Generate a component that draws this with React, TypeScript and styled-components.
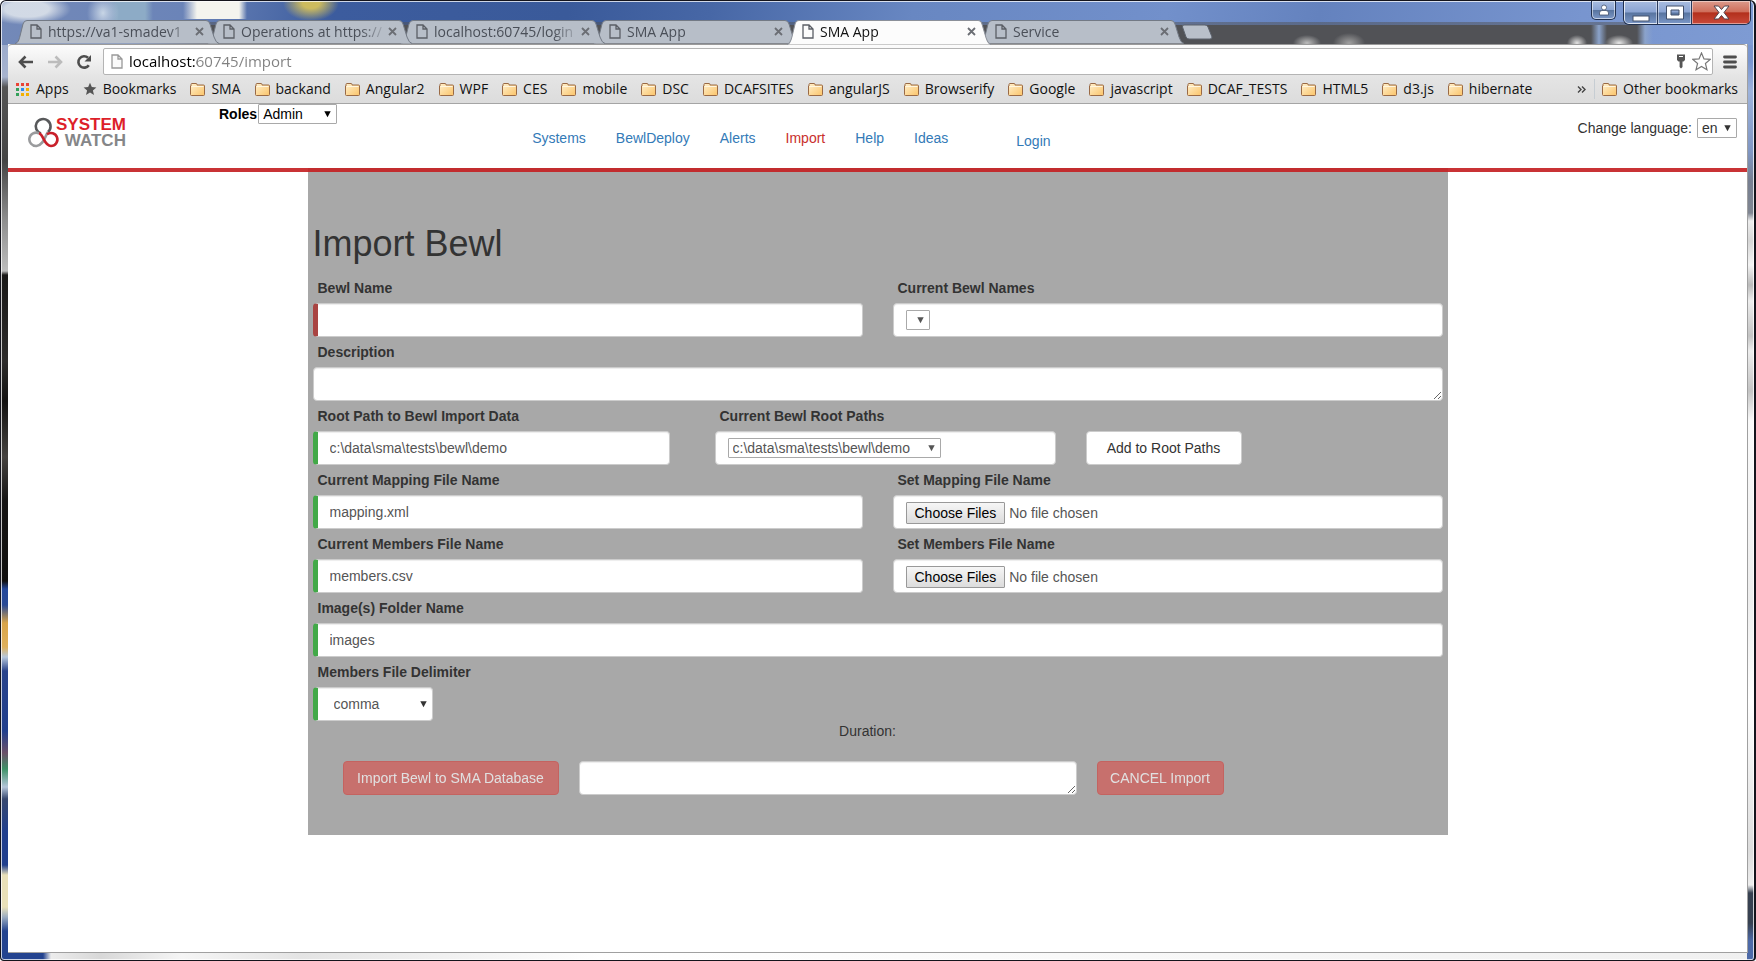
import React from "react";
import styled, { createGlobalStyle, css } from "styled-components";

const GlobalStyle = createGlobalStyle`
  *, *::before, *::after { box-sizing: border-box; }
  body { margin: 0; font-family: "Liberation Sans", Arial, sans-serif; font-size: 14px; line-height: 20px; color: #333; }
  button, input, select, textarea { font-family: inherit; font-size: inherit; line-height: inherit; margin: 0; }
  button { cursor: pointer; }
`;

/* ---------- window frame ---------- */

const Frame = styled.div`
  min-height: 100vh;
  display: flex;
  flex-direction: column;
  border: 1px solid #14141c;
  border-right-width: 2px;
  border-radius: 6px 6px 4px 4px;
  box-shadow: inset 0 0 0 1px rgba(255, 255, 255, 0.75);
  background:
    radial-gradient(ellipse 44px 16px at 26px 8px, rgba(215, 222, 232, 0.95) 50%, transparent) no-repeat,
    radial-gradient(ellipse 16px 20px at 102px 12px, rgba(205, 218, 232, 0.95), transparent) no-repeat,
    linear-gradient(90deg, transparent 104px, #8dabc6 116px, #8dabc6 144px, transparent 152px) 0 0 / 100% 20px no-repeat,
    linear-gradient(90deg, transparent 182px, #f4f4ee 196px, #f4f4ee 238px, transparent 246px) 0 0 / 100% 18px no-repeat,
    radial-gradient(ellipse 28px 18px at 310px 2px, #cdbb5e 30%, transparent) no-repeat,
    radial-gradient(ellipse 14px 8px at 1306px 42px, #bdbdbd, transparent) no-repeat,
    radial-gradient(ellipse 16px 10px at 1348px 42px, #a0a0a0, transparent) no-repeat,
    radial-gradient(ellipse 10px 8px at 1576px 42px, #e4e4e4, transparent) no-repeat,
    radial-gradient(ellipse 14px 8px at 1618px 42px, #e8e8e8, transparent) no-repeat,
    linear-gradient(90deg, transparent 130px, #515256 210px, #515256 1590px, #8ba3cb 1598px, transparent 1606px) 0 24px / 100% 20px no-repeat,
    linear-gradient(90deg, transparent 130px, rgba(81, 82, 86, 0.5) 210px, rgba(81, 82, 86, 0.5) 1636px, transparent 1646px) 0 21px / 100% 3px no-repeat,
    linear-gradient(90deg, transparent 1588px, #515256 1590px, #515256 1636px, #8ba3cb 1644px, transparent 1652px) 0 24px / 100% 20px no-repeat,
    linear-gradient(100deg, #7389b8 0, #6b84b8 180px, #3c5c9e 330px, #3a5a9a 560px, #4767a6 700px, #6887c2 900px, #7290cb 1150px, #6482be 1300px, #7895cf 1560px, #7e9bd3 100%) 0 0 / 100% 44px no-repeat,
    linear-gradient(180deg, #8da0c8 0, #a7b3ce 76px, #555 86px, #444 160px, #8f8f8f 220px, #bdbdbd 270px, #191817 274px, #2d2c2b 360px, #131211 400px, #45423f 456px, #161514 500px, #100f0e 580px, #23479a 588px, #2a4a94 604px, #d9a549 622px, #dfb15c 646px, #b7c8dc 656px, #29438b 670px, #213f8d 730px, #6b5068 752px, #3f9268 768px, #b4c5d9 786px, #37486f 798px, #213f8d 830px, #213f8d 864px, #e9e0b9 874px, #e9e0b9 906px, #9cadc1 916px, #23438f 930px) 0 0 / 8px 100% no-repeat,
    linear-gradient(180deg, #7e9bd3 0, #7895cf 60px, #9db3dc 90px, #8097c4 150px, #777f91 180px, #808692 212px, #eee 220px, #d6d6d6 240px, #f4f4f4 264px, #bbb 284px, #eee 300px, #c4c4c4 335px, #eee 350px, #c4c4c4 390px, #fafafa 420px, #eee 600px, #fff 700px, #ddd 850px, #eee 884px, #374151 892px, #374151 922px, #4d6aa8 940px) 100% 0 / 7px 100% no-repeat,
    linear-gradient(90deg, #23438f 42px, #ececec 50px, #d8d8d8 100px, #f5f5f5 180px, #e4e4e4 300px, #fff 600px, #f0f0f0 100%);
`;

const TitleBar = styled.header`
  display: flex;
  align-items: flex-start;
  height: 43px;
  padding: 0 3px 0 14px;
`;

const TabStrip = styled.div`
  display: flex;
  flex: 1;
  min-width: 0;
  margin-top: 19px;
  align-items: flex-start;
`;

const Tab = styled.div<{ $active?: boolean; $order: number }>`
  position: relative;
  z-index: ${(p) => (p.$active ? 20 : p.$order)};
  flex: 0 1 204px;
  min-width: 0;
  height: ${(p) => (p.$active ? 25 : 24)}px;
  margin-right: -11px;
  padding: 0 14px ${(p) => (p.$active ? 2 : 1)}px 15px;
  display: flex;
  align-items: center;
  color: ${(p) => (p.$active ? "#111" : "#4a4f58")};
`;

const TabShape = styled.svg`
  position: absolute;
  inset: 0;
  width: 100%;
  height: 100%;
  z-index: -1;
`;

const TabTitle = styled.button`
  flex: 1;
  min-width: 0;
  display: flex;
  align-items: center;
  gap: 6px;
  padding: 0;
  border: 0;
  background: none;
  color: inherit;
  font-family: "Open Sans", "Noto Sans", sans-serif;
  line-height: 22px;
  text-align: left;
  svg { flex: none; }
`;

const TabText = styled.span`
  flex: 1;
  overflow: hidden;
  white-space: nowrap;
  mask-image: linear-gradient(90deg, #000 calc(100% - 28px), transparent);
`;

const TabClose = styled.button`
  flex: none;
  width: 10px;
  height: 20px;
  padding: 0;
  border: 0;
  background: none;
  display: flex;
  align-items: center;
`;

const NewTab = styled.button`
  margin: 4px 0 0 8px;
  padding: 0;
  border: 0;
  background: none;
  line-height: 0;
`;

const glass = css`
  border: 1px solid #20304f;
  border-top: 0;
  box-shadow: inset 0 0 0 1px rgba(255, 255, 255, 0.55);
  background: linear-gradient(#a9bde0, #8ba4d2 48%, #58749f 52%, #7c98c8);
`;

const ProfileButton = styled.button`
  ${glass}
  width: 25px;
  height: 19px;
  margin-right: 7px;
  padding: 0;
  border-radius: 0 0 5px 5px;
  line-height: 0;
`;

const WindowControls = styled.div`
  ${glass}
  display: flex;
  height: 24px;
  border-radius: 0 0 6px 6px;
  overflow: hidden;
`;

const WindowButton = styled.button<{ $close?: boolean }>`
  width: ${(p) => (p.$close ? 58 : 34)}px;
  padding: 0;
  border: 0;
  border-right: ${(p) => (p.$close ? "0" : "1px solid #2b3b5c")};
  box-shadow: inset 0 0 0 1px rgba(255, 255, 255, 0.45);
  background: ${(p) => (p.$close ? "linear-gradient(#dc9a8b, #cf6f5c 46%, #b3301c 52%, #c9493a)" : "none")};
  display: flex;
  align-items: center;
  justify-content: center;
`;

const Client = styled.div`
  flex: 1;
  display: flex;
  flex-direction: column;
  margin: 0 6px 7px 7px;
  border-right: 1px solid #a0a0a0;
  border-bottom: 1px solid #a0a0a0;
  background: #fff;
`;

/* ---------- browser bars ---------- */

const Chrome = styled.div`
  border-top: 1px solid #9a9a9a;
  border-bottom: 1px solid #a5a5a5;
  border-radius: 4px 4px 0 0;
  background: linear-gradient(#fcfcfc, #e4e4e4 32px, #dcdcdc);
  font-family: "Open Sans", "Noto Sans", sans-serif;
`;

const Toolbar = styled.div`
  display: flex;
  align-items: center;
  padding: 3px 10px 0 10px;
`;

const ToolButton = styled.button`
  width: 29px;
  height: 27px;
  padding: 0;
  border: 0;
  background: none;
  line-height: 0;
  text-align: left;
`;

const Omnibox = styled.label`
  flex: 1;
  display: flex;
  align-items: center;
  gap: 6px;
  height: 27px;
  margin-left: -2px;
  margin-right: 10px;
  padding: 0 1px 0 7px;
  border: 1px solid #b4b4b4;
  border-radius: 2px;
  background: #fff;
`;

const Address = styled.input`
  flex: 1;
  min-width: 0;
  height: 24px;
  padding: 0 0 2px;
  border: 0;
  outline: 0;
  font-size: 15px;
  color: transparent;
  caret-color: #000;
  background: linear-gradient(90deg, #000 68px, #808080 68px);
  background-clip: text;
`;

const MenuButton = styled(ToolButton)`
  width: 14px;
`;

const BookmarkBar = styled.nav`
  display: flex;
  align-items: center;
  gap: 14px;
  height: 28px;
  padding: 0 9px 0 8px;
  overflow: hidden;
`;

const Bookmark = styled.a`
  display: flex;
  align-items: center;
  gap: 6px;
  flex: none;
  color: #111;
  text-decoration: none;
  white-space: nowrap;
`;

const Overflow = styled.div`
  margin-left: auto;
  display: flex;
  align-items: center;
  gap: 7px;
`;

const MoreButton = styled.button`
  padding: 0 8px 0 0;
  border: 0;
  border-right: 1px solid #c6cdd3;
  background: none;
  line-height: 0;
  height: 20px;
`;

/* ---------- site header ---------- */

const SiteHeader = styled.div`
  position: relative;
  z-index: 1;
  display: flex;
  align-items: flex-start;
  height: 68px;
  padding: 0 10px 0 20px;
  border-bottom: 4px solid rgba(196, 34, 36, 0.92);
`;

const Logo = styled.a`
  display: flex;
  flex: none;
  width: 98px;
  margin-top: 13px;
  text-decoration: none;
  font-weight: bold;
  font-size: 17px;
  line-height: 16px;
`;

const LogoMark = styled.svg`
  flex: none;
  width: 34px;
  height: 31px;
  margin-right: -6px;
`;

const LogoText = styled.span`
  display: flex;
  flex-direction: column;
  align-items: flex-end;
  color: #dd1f2a;
`;

const LogoSub = styled.span`
  color: #858688;
`;

const Roles = styled.div`
  display: flex;
  flex: none;
  margin-left: 93px;
  color: #000;
`;

const RoleLabel = styled.label`
  font-weight: bold;
  margin-right: 1px;
`;

const SiteNav = styled.nav`
  display: flex;
  flex: 1;
  margin-left: 180px;
  padding-top: 24px;
`;

const NavLink = styled.a<{ $active?: boolean; $login?: boolean }>`
  padding: 0 15px;
  color: ${(p) => (p.$active ? "#c9302c" : "#337ab7")};
  text-decoration: none;
  ${(p) => p.$login && css`margin: 3px 0 0 38px;`}
`;

const Language = styled.div`
  display: flex;
  gap: 5px;
  padding-top: 14px;
  white-space: nowrap;
`;

/* ---------- drop-downs ---------- */

const SelectWrap = styled.span`
  display: inline-grid;
  align-items: center;
  line-height: 18px;
  > * { grid-area: 1 / 1; }
  > svg { justify-self: end; margin-right: 6px; pointer-events: none; }
`;

const Select = styled.select<{ $width: number }>`
  appearance: none;
  width: ${(p) => p.$width}px;
  height: 20px;
  padding: 0 4px;
  border: 1px solid #a9a9a9;
  border-radius: 1px;
  background: #fff;
  color: inherit;
`;

/* ---------- form ---------- */

const Panel = styled.main`
  width: 100%;
  max-width: 1140px;
  margin: -4px auto 0;
  padding: 56px 5px 40px;
  background: #a8a8a8;
`;

const Title = styled.h1`
  margin: 0 0 14px;
  font-size: 36px;
  line-height: 40px;
  font-weight: 500;
`;

const Row = styled.div<{ $columns?: string; $last?: boolean }>`
  display: grid;
  grid-template-columns: ${(p) => p.$columns ?? "1fr"};
  column-gap: 30px;
  align-items: end;
  margin-bottom: ${(p) => (p.$last ? 0 : 5)}px;
`;

const Group = styled.div<{ $gutter?: boolean }>`
  min-width: 0;
  padding-right: ${(p) => (p.$gutter ? 15 : 0)}px;
`;

const Label = styled.label`
  display: block;
  margin-bottom: 5px;
  padding-left: 5px;
  font-weight: bold;
`;

const control = css`
  display: block;
  width: 100%;
  height: 34px;
  border: 1px solid #ccc;
  border-radius: 4px;
  background: #fff;
  box-shadow: inset 0 1px 1px rgba(0, 0, 0, 0.075);
  color: #555;
`;

const stateColor = { valid: "#42a948", invalid: "#a94442" };

const TextInput = styled.input<{ $state: "valid" | "invalid" }>`
  ${control}
  padding: 6px 12px;
  border-left: 5px solid ${(p) => stateColor[p.$state]};
`;

const FileInput = styled.input`
  ${control}
  padding: 6px 12px;
  &::file-selector-button {
    height: 22px;
    margin: 0 4px 0 0;
    padding: 0 8px;
    border: 1px solid #999;
    border-radius: 1px;
    background: linear-gradient(#f6f6f6, #dcdcdc);
    color: #000;
    font: inherit;
    line-height: 18px;
  }
`;

const TextArea = styled.textarea`
  ${control}
  padding: 6px 12px;
  resize: both;
`;

const SelectBox = styled.div`
  ${control}
  display: flex;
  align-items: flex-start;
  padding: 6px 12px;
`;

const DelimiterSelect = styled.select`
  ${control}
  appearance: none;
  width: 120px;
  padding: 0 16px;
  border-left: 5px solid #42a948;
`;

const WhiteButton = styled.button`
  width: 156px;
  height: 34px;
  border: 1px solid #ccc;
  border-radius: 4px;
  background: #fff;
  color: #333;
`;

const Duration = styled.div`
  padding-right: 20px;
  text-align: center;
`;

const Actions = styled.div`
  display: flex;
  gap: 20px;
  margin-top: 20px;
  padding-left: 30px;
`;

const DangerButton = styled.button<{ $width: number }>`
  flex: none;
  min-width: ${(p) => p.$width}px;
  height: 34px;
  padding: 0 12px;
  border: 1px solid #d43f3a;
  border-radius: 4px;
  background: #d9534f;
  color: #fff;
  opacity: 0.65;
`;

const StatusArea = styled(TextArea)`
  flex: 0 1 498px;
  min-width: 0;
`;

/* ---------- icons ---------- */

const Caret = () => (
  <svg width="7" height="7" viewBox="0 0 7 7" aria-hidden="true">
    <path d="M0.3 0.3h6.4L3.5 6.3z" fill="currentColor" />
  </svg>
);

const PageIcon = ({ color = "#5b5f66", fill = "none" }: { color?: string; fill?: string }) => (
  <svg width="12" height="15" viewBox="0 0 12 15" aria-hidden="true">
    <path d="M1 1h6l4 4v9H1z M7 1v4h4" fill={fill} stroke={color} strokeWidth="1.3" />
  </svg>
);

const FolderIcon = () => (
  <svg width="15" height="13" viewBox="0 0 15 13" aria-hidden="true">
    <defs>
      <linearGradient id="folder" x1="0" y1="0" x2="1" y2="1">
        <stop offset="0" stopColor="#fff0cd" />
        <stop offset="1" stopColor="#fbc469" />
      </linearGradient>
    </defs>
    <path d="M1 3V1.5Q1 .5 2 .5h4q1 0 1 1V2h6.5q1 0 1 1v8.5q0 1-1 1h-12q-1 0-1-1V3z" fill="url(#folder)" stroke="#9a6a45" />
    <path d="M1.5 3.5h12" stroke="#fff6e0" />
  </svg>
);

const AppsIcon = () => {
  const colors = ["#ea4335", "#ea4335", "#ea4335", "#34a05a", "#2b8cf0", "#f3b000", "#34a05a", "#f3b000", "#f3b000"];
  return (
    <svg width="14" height="13" viewBox="0 0 14 13" aria-hidden="true">
      {colors.map((c, i) => (
        <rect key={i} x={(i % 3) * 5} y={Math.floor(i / 3) * 5} width="3" height="3" fill={c} />
      ))}
    </svg>
  );
};

const starPath = "M8 0.8l2.1 5 5.2.4-4 3.5 1.3 5.2L8 12.1l-4.6 2.8 1.3-5.2-4-3.5 5.2-.4z";

const StarIcon = ({ outline }: { outline?: boolean }) => (
  <svg width={outline ? 19 : 14} height={outline ? 19 : 14} viewBox="0 0 16 16" aria-hidden="true">
    <path d={starPath} fill={outline ? "#fff" : "#555"} stroke={outline ? "#777" : "none"} />
  </svg>
);

const Arrow = ({ color, flip }: { color: string; flip?: boolean }) => (
  <svg width="16" height="14" viewBox="0 0 16 14" aria-hidden="true">
    <path
      d={flip ? "M1 7h13M8.5 1.5L14 7l-5.5 5.5" : "M15 7H2M7.5 1.5L2 7l5.5 5.5"}
      fill="none"
      stroke={color}
      strokeWidth="2.6"
    />
  </svg>
);

const ReloadIcon = () => (
  <svg width="16" height="16" viewBox="0 0 16 16" aria-hidden="true">
    <path d="M12.8 11.2A5.7 5.7 0 1 1 12 3.8" fill="none" stroke="#4d4d4d" strokeWidth="2.6" />
    <path d="M15 1v6.5H8.5z" fill="#4d4d4d" />
  </svg>
);

const KeyIcon = () => (
  <svg width="10" height="15" viewBox="0 0 10 15" aria-hidden="true">
    <path d="M1 .5h8v5.5L7.5 7.5H6.5V13L5 14.5 3.6 13V7.5H2.5L1 6z" fill="#555" />
    <path d="M3 2.5h4" stroke="#fff" />
  </svg>
);

const MenuIcon = () => (
  <svg width="14" height="14" viewBox="0 0 14 14" aria-hidden="true">
    <path d="M1.5 2h11M1.5 7h11M1.5 12h11" stroke="#4d4d4d" strokeWidth="2.8" strokeLinecap="round" />
  </svg>
);

/* ---------- data ---------- */

const tabs = [
  { title: "https://va1-smadev1" },
  { title: "Operations at https://" },
  { title: "localhost:60745/login" },
  { title: "SMA App" },
  { title: "SMA App", active: true },
  { title: "Service" },
];

const folders = [
  "SMA", "backand", "Angular2", "WPF", "CES", "mobile", "DSC", "DCAFSITES", "angularJS",
  "Browserify", "Google", "javascript", "DCAF_TESTS", "HTML5", "d3.js", "hibernate",
];

const links = ["Systems", "BewlDeploy", "Alerts", "Import", "Help", "Ideas"];

const rootPath = "c:\\data\\sma\\tests\\bewl\\demo";

const BrowserTab = ({ title, active, order }: { title: string; active?: boolean; order: number }) => (
  <Tab $active={active} $order={order}>
    <TabShape viewBox="0 0 204 24" preserveAspectRatio="none" aria-hidden="true">
      <path
        d="M0 23.5C3 23 4 20 5 16L8 4Q9 .5 12 .5H191Q194 .5 195 4L199 17Q201 23 204 23.5"
        fill={active ? "#fcfcfc" : "#b7bec8"}
        stroke={active ? "#8b9099" : "#737a85"}
      />
    </TabShape>
    <TabTitle>
      <PageIcon />
      <TabText>{title}</TabText>
    </TabTitle>
    <TabClose aria-label={`Close ${title}`}>
      <svg width="9" height="9" viewBox="0 0 9 9">
        <path d="M1 1l7 7M8 1L1 8" stroke="#6b6e74" strokeWidth="1.8" />
      </svg>
    </TabClose>
  </Tab>
);

export default function App() {
  return (
    <Frame>
      <GlobalStyle />
      <TitleBar>
        <TabStrip>
          {tabs.map((t, i) => (
            <BrowserTab key={i} title={t.title} active={t.active} order={10 - i} />
          ))}
          <NewTab aria-label="New tab">
            <svg width="32" height="16" viewBox="0 0 32 16">
              <path d="M3 1h21q2 0 3 2l4 10q0 2-2 2H8q-2 0-3-2L1.5 3Q1 1 3 1z" fill="#b9c0ca" stroke="#5c626c" />
            </svg>
          </NewTab>
        </TabStrip>
        <ProfileButton aria-label="Profile">
          <svg width="12" height="12" viewBox="0 0 12 12">
            <circle cx="6" cy="3.5" r="2.5" fill="#fff" stroke="#42526e" strokeWidth=".8" />
            <path d="M1.5 11V9Q1.5 6.5 4 6.5h4q2.5 0 2.5 2.5v2z" fill="#fff" stroke="#42526e" strokeWidth=".8" />
          </svg>
        </ProfileButton>
        <WindowControls>
          <WindowButton aria-label="Minimize">
            <svg width="18" height="18" viewBox="0 0 18 18">
              <rect x="1" y="12" width="16" height="5" fill="#fff" stroke="#42506b" />
            </svg>
          </WindowButton>
          <WindowButton aria-label="Maximize">
            <svg width="18" height="15" viewBox="0 0 18 15">
              <path d="M.5 1h17v13H.5zM5 5v5h8V5z" fill="#fff" stroke="#42506b" fillRule="evenodd" />
            </svg>
          </WindowButton>
          <WindowButton $close aria-label="Close">
            <svg width="17" height="15" viewBox="0 0 17 15">
              <path d="M1 1h4.5l3 3.5L11.5 1H16l-5 6.5L16 14h-4.5l-3-3.5L5.5 14H1l5-6.5z" fill="#fff" stroke="#50454f" />
            </svg>
          </WindowButton>
        </WindowControls>
      </TitleBar>

      <Client>
        <Chrome>
          <Toolbar>
            <ToolButton aria-label="Back"><Arrow color="#4d4d4d" /></ToolButton>
            <ToolButton aria-label="Forward"><Arrow color="#bcbcbc" flip /></ToolButton>
            <ToolButton aria-label="Reload"><ReloadIcon /></ToolButton>
            <Omnibox>
              <PageIcon color="#999" fill="#fafafa" />
              <Address aria-label="Address" defaultValue="localhost:60745/import" spellCheck={false} />
              <KeyIcon />
              <StarIcon outline />
            </Omnibox>
            <MenuButton aria-label="Menu"><MenuIcon /></MenuButton>
          </Toolbar>
          <BookmarkBar>
            <Bookmark href="#apps"><AppsIcon />Apps</Bookmark>
            <Bookmark href="#bookmarks"><StarIcon />Bookmarks</Bookmark>
            {folders.map((f) => (
              <Bookmark key={f} href={`#${f}`}><FolderIcon />{f}</Bookmark>
            ))}
            <Overflow>
              <MoreButton aria-label="More bookmarks">
                <svg width="9" height="7" viewBox="0 0 9 7">
                  <path d="M1 .5l3 3-3 3M5 .5l3 3-3 3" fill="none" stroke="#444" strokeWidth="1.4" />
                </svg>
              </MoreButton>
              <Bookmark href="#other"><FolderIcon />Other bookmarks</Bookmark>
            </Overflow>
          </BookmarkBar>
        </Chrome>

        <SiteHeader>
          <Logo href="#home">
            <LogoMark viewBox="0 0 34 31" aria-hidden="true">
              <g fill="none" strokeWidth="2.6">
                <path d="M13 16.5A7.4 7.4 0 1 1 20 15" stroke="#58595b" />
                <path d="M20 15C17 19 16 28 8.5 29A6.7 6.7 0 1 1 11 16.3" stroke="#9a9b9d" />
                <path d="M11 16.3C16 18 16 29 23 29A6.5 6.5 0 1 0 19 17.3" stroke="#c9202a" />
              </g>
            </LogoMark>
            <LogoText>
              SYSTEM
              <LogoSub>WATCH</LogoSub>
            </LogoText>
          </Logo>
          <Roles>
            <RoleLabel htmlFor="role">Roles</RoleLabel>
            <SelectWrap>
              <Select id="role" $width={79}><option>Admin</option></Select>
              <Caret />
            </SelectWrap>
          </Roles>
          <SiteNav>
            {links.map((l) => (
              <NavLink key={l} href={`#${l}`} $active={l === "Import"}>{l}</NavLink>
            ))}
            <NavLink href="#login" $login>Login</NavLink>
          </SiteNav>
          <Language>
            <label htmlFor="lang">Change language:</label>
            <SelectWrap>
              <Select id="lang" $width={40}><option>en</option></Select>
              <Caret />
            </SelectWrap>
          </Language>
        </SiteHeader>

        <Panel>
          <Title>Import Bewl</Title>
          <Row $columns="1fr 1fr">
            <Group>
              <Label htmlFor="name">Bewl Name</Label>
              <TextInput id="name" $state="invalid" />
            </Group>
            <Group>
              <Label htmlFor="names">Current Bewl Names</Label>
              <SelectBox>
                <SelectWrap>
                  <Select id="names" $width={24} />
                  <Caret />
                </SelectWrap>
              </SelectBox>
            </Group>
          </Row>
          <Row>
            <Group>
              <Label htmlFor="description">Description</Label>
              <TextArea id="description" />
            </Group>
          </Row>
          <Row $columns="372fr 341fr 357fr">
            <Group $gutter>
              <Label htmlFor="root">Root Path to Bewl Import Data</Label>
              <TextInput id="root" $state="valid" defaultValue={rootPath} />
            </Group>
            <Group>
              <Label htmlFor="roots">Current Bewl Root Paths</Label>
              <SelectBox>
                <SelectWrap>
                  <Select id="roots" $width={213}><option>{rootPath}</option></Select>
                  <Caret />
                </SelectWrap>
              </SelectBox>
            </Group>
            <WhiteButton>Add to Root Paths</WhiteButton>
          </Row>
          <Row $columns="1fr 1fr">
            <Group>
              <Label htmlFor="mapping">Current Mapping File Name</Label>
              <TextInput id="mapping" $state="valid" defaultValue="mapping.xml" />
            </Group>
            <Group>
              <Label htmlFor="mappingFile">Set Mapping File Name</Label>
              <FileInput id="mappingFile" type="file" multiple />
            </Group>
          </Row>
          <Row $columns="1fr 1fr">
            <Group>
              <Label htmlFor="members">Current Members File Name</Label>
              <TextInput id="members" $state="valid" defaultValue="members.csv" />
            </Group>
            <Group>
              <Label htmlFor="membersFile">Set Members File Name</Label>
              <FileInput id="membersFile" type="file" multiple />
            </Group>
          </Row>
          <Row>
            <Group>
              <Label htmlFor="images">Image(s) Folder Name</Label>
              <TextInput id="images" $state="valid" defaultValue="images" />
            </Group>
          </Row>
          <Row $last>
            <Group>
              <Label htmlFor="delimiter">Members File Delimiter</Label>
              <SelectWrap>
                <DelimiterSelect id="delimiter"><option>comma</option></DelimiterSelect>
                <Caret />
              </SelectWrap>
            </Group>
          </Row>
          <Duration>Duration:</Duration>
          <Actions>
            <DangerButton $width={216}>Import Bewl to SMA Database</DangerButton>
            <StatusArea aria-label="Import status" />
            <DangerButton $width={127}>CANCEL Import</DangerButton>
          </Actions>
        </Panel>
      </Client>
    </Frame>
  );
}
